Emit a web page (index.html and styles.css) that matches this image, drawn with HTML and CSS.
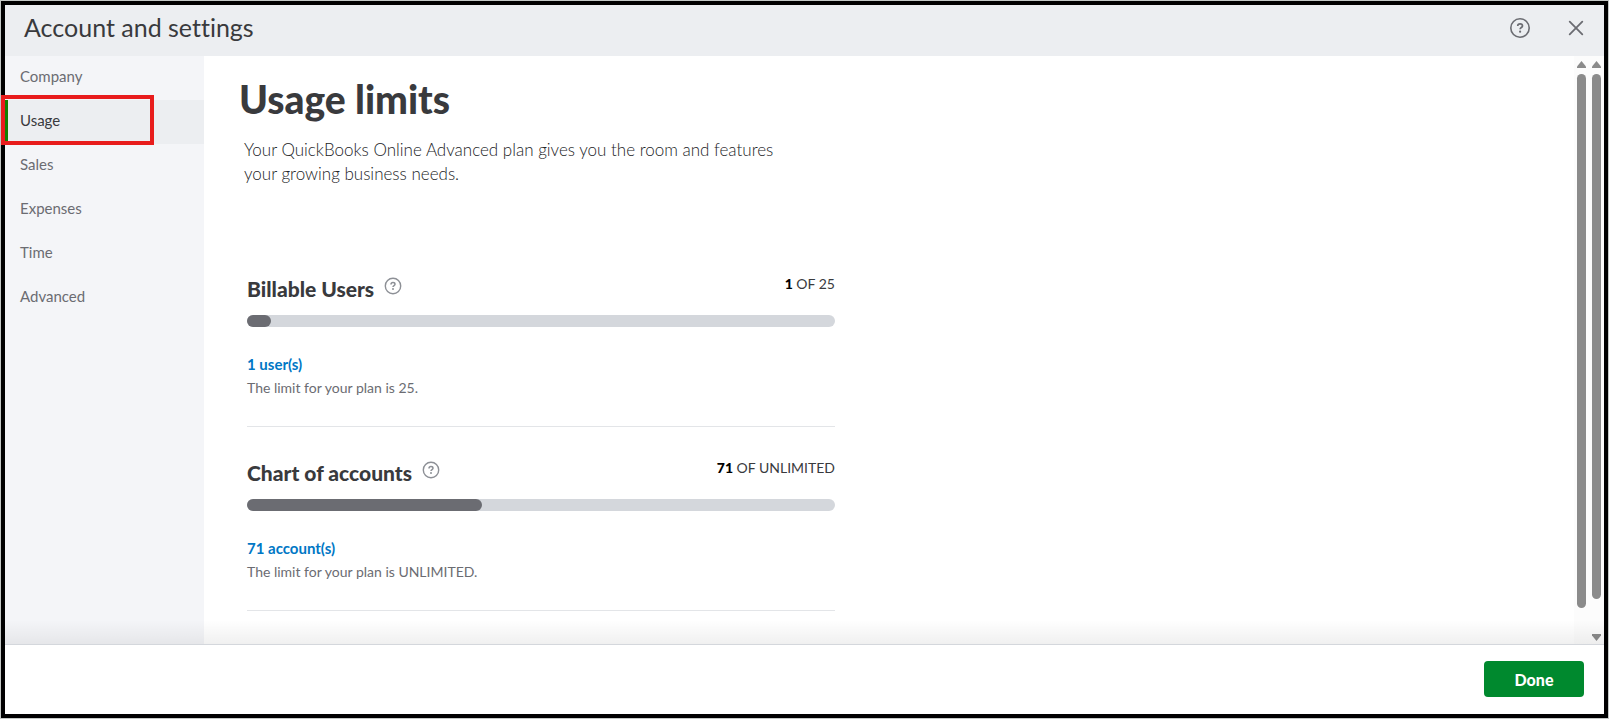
FILE: index.html
```
<!DOCTYPE html>
<html lang="en">
  <head>
    <meta charset="UTF-8" />
    <meta name="viewport" content="width=device-width, initial-scale=1.0" />
    <title>Account and settings</title>
    <link rel="stylesheet" href="styles.css">
  </head>
  <body>
    <div class="window">
      <header class="header">
        <h1 class="header-title">Account and settings</h1>
        <button class="icon-btn" type="button" aria-label="Help">
          <svg width="22" height="22" viewBox="0 0 22 22" fill="none" stroke="currentColor">
            <circle cx="11" cy="11" r="9.2" stroke-width="1.6" />
            <path d="M8.7 9.1c0-1.3 1-2.2 2.4-2.2s2.4.9 2.4 2.1c0 1.5-2.4 1.6-2.4 3.2" stroke-width="1.7" />
            <circle cx="11.1" cy="14.7" r="1.1" fill="currentColor" stroke="none" />
          </svg>
        </button>
        <button class="icon-btn" type="button" aria-label="Close">
          <svg width="22" height="22" viewBox="0 0 22 22" fill="none" stroke="currentColor" stroke-width="1.8" stroke-linecap="round">
            <path d="M4.7 4.7l12.6 12.6M17.3 4.7L4.7 17.3" />
          </svg>
        </button>
      </header>

      <div class="body">
        <nav class="sidebar">
          <a class="nav-item" href="#company">Company</a>
          <a class="nav-item active" href="#usage">Usage<span class="highlight"></span></a>
          <a class="nav-item" href="#sales">Sales</a>
          <a class="nav-item" href="#expenses">Expenses</a>
          <a class="nav-item" href="#time">Time</a>
          <a class="nav-item" href="#advanced">Advanced</a>
        </nav>

        <main class="content">
          <h2 class="title">Usage limits</h2>
          <p class="intro">Your QuickBooks Online Advanced plan gives you the room and features your growing business needs.</p>

          <section class="limit">
            <div class="limit-head">
              <h3 class="limit-name">Billable Users</h3>
              <button class="help-btn" type="button" aria-label="About billable users">
                <svg width="18" height="18" viewBox="0 0 18 18" fill="none" stroke="currentColor">
                  <circle cx="9" cy="9" r="7.7" stroke-width="1.4" />
                  <path d="M7 7.4c0-1.1.9-1.8 2-1.8s2 .7 2 1.7c0 1.2-2 1.3-2 2.6" stroke-width="1.5" />
                  <circle cx="9" cy="12" r="1" fill="currentColor" stroke="none" />
                </svg>
              </button>
              <span class="count"><b>1</b> OF 25</span>
            </div>
            <div class="bar" role="progressbar" aria-label="Billable Users" aria-valuenow="4"><div class="fill" style="width: 4%"></div></div>
            <a class="detail" href="#users">1 user(s)</a>
            <p class="note">The limit for your plan is 25.</p>
          </section>

          <section class="limit">
            <div class="limit-head">
              <h3 class="limit-name">Chart of accounts</h3>
              <button class="help-btn" type="button" aria-label="About chart of accounts">
                <svg width="18" height="18" viewBox="0 0 18 18" fill="none" stroke="currentColor">
                  <circle cx="9" cy="9" r="7.7" stroke-width="1.4" />
                  <path d="M7 7.4c0-1.1.9-1.8 2-1.8s2 .7 2 1.7c0 1.2-2 1.3-2 2.6" stroke-width="1.5" />
                  <circle cx="9" cy="12" r="1" fill="currentColor" stroke="none" />
                </svg>
              </button>
              <span class="count"><b>71</b> OF UNLIMITED</span>
            </div>
            <div class="bar" role="progressbar" aria-label="Chart of accounts" aria-valuenow="40"><div class="fill" style="width: 40%"></div></div>
            <a class="detail" href="#accounts">71 account(s)</a>
            <p class="note">The limit for your plan is UNLIMITED.</p>
          </section>
        </main>

        <div class="scrollbars">
          <div class="scrollbar inner">
            <svg width="9" height="7" viewBox="0 0 9 7"><path d="M4.5 0L9 5.5V7H0V5.5z" fill="currentColor" /></svg>
            <div class="thumb"></div>
          </div>
          <div class="scrollbar">
            <svg width="9" height="7" viewBox="0 0 9 7"><path d="M4.5 0L9 5.5V7H0V5.5z" fill="currentColor" /></svg>
            <div class="thumb"></div>
            <svg class="down" width="9" height="7" viewBox="0 0 9 7"><path d="M4.5 7L9 1.5V0H0v1.5z" fill="currentColor" /></svg>
          </div>
        </div>
      </div>

      <footer class="footer">
        <button class="done" type="button">Done</button>
      </footer>
    </div>
  </body>
</html>
```
FILE: styles.css
```
* {
  box-sizing: border-box;
  margin: 0;
}
body {
  background: #c4c8c6;
  padding: 1px;
  font-family: Lato, "Liberation Sans", sans-serif;
  font-size: 14px;
  font-variant-ligatures: none;
  color: #393a3d;
}
button {
  font-family: inherit;
  border: 0;
  padding: 0;
  cursor: pointer;
}
.window {
  display: flex;
  flex-direction: column;
  height: calc(100vh - 2px);
  border: 4px solid #000;
  background: #fff;
}
.header {
  display: flex;
  align-items: center;
  gap: 34px;
  height: 51px;
  padding: 0 17px 5px 19px;
  background: #eceef1;
}
.header-title {
  flex: 1;
  padding-bottom: 2px;
  font-size: 25px;
  font-weight: 400;
  line-height: 32px;
}
.icon-btn {
  display: flex;
  background: none;
  color: #6b6c72;
}
.body {
  display: flex;
  flex: 1;
  min-height: 0;
  position: relative;
}
/* shade above the footer */
.body::after {
  content: "";
  position: absolute;
  left: 0;
  right: 0;
  bottom: 0;
  height: 24px;
  background: linear-gradient(rgba(0, 0, 0, 0), rgba(0, 0, 0, 0.06));
}
.sidebar {
  width: 199px;
  background: #f4f5f8;
}
.nav-item {
  display: block;
  height: 44px;
  padding-left: 15px;
  font-size: 15px;
  line-height: 40px;
  color: #6b6c72;
  text-decoration: none;
}
.nav-item.active {
  position: relative;
  padding-left: 12px;
  border-left: 3px solid #108000;
  background: #eceef1;
  color: #393a3d;
}
.highlight {
  position: absolute;
  left: -7px;
  top: -5px;
  width: 153px;
  height: 50px;
  border: 4px solid #e81c1c;
}
.content {
  flex: 1;
  padding: 20px 36px 0 35px;
}
.title {
  font-size: 39px;
  font-weight: 900;
  line-height: 46px;
}
.intro {
  max-width: 560px;
  margin: 16px 0 85px 5px;
  font-size: 17px;
  font-weight: 300;
  line-height: 24px;
  color: #222326;
}
.limit {
  max-width: 588px;
  height: 184px;
  margin-left: 8px;
  border-bottom: 1px solid #e3e5e8;
}
.limit + .limit {
  padding-top: 28px;
}
.limit:first-of-type {
  height: 156px;
}
.limit-head {
  display: flex;
  height: 44px;
}
.limit-name {
  font-size: 21px;
  font-weight: 900;
  line-height: 36px;
}
.help-btn {
  display: flex;
  height: 18px;
  margin: 6px 0 0 10px;
  background: none;
  color: #8d9096;
}
.count {
  flex: 1;
  text-align: right;
  line-height: 26px;
}
.count b {
  font-weight: 900;
  color: #000;
}
.bar {
  height: 12px;
  border-radius: 6px;
  background: #d4d7dc;
}
.fill {
  height: 12px;
  border-radius: 6px;
  background: #6b6c72;
}
.detail {
  display: block;
  margin-top: 25px;
  font-size: 15px;
  font-weight: 700;
  line-height: 24px;
  color: #0077c5;
  text-decoration: none;
}
.note {
  line-height: 24px;
  color: #6b6c72;
}
.scrollbars {
  display: flex;
  gap: 6px;
  padding: 5px 3px 3px;
  background: #fcfcfc;
  color: #8b8b8b;
}
.scrollbar {
  display: flex;
  flex-direction: column;
  gap: 6px;
}
.scrollbar.inner {
  padding-bottom: 33px;
}
.thumb {
  flex: 1;
  width: 9px;
  border-radius: 5px;
  background: currentColor;
}
.down {
  margin-top: 29px;
}
.footer {
  display: flex;
  justify-content: flex-end;
  height: 70px;
  padding: 16px 20px;
  border-top: 1px solid #d4d7dc;
}
.done {
  width: 100px;
  height: 36px;
  border-radius: 4px;
  background: #00892e;
  color: #fff;
  font-size: 16px;
  font-weight: 900;
}
```
